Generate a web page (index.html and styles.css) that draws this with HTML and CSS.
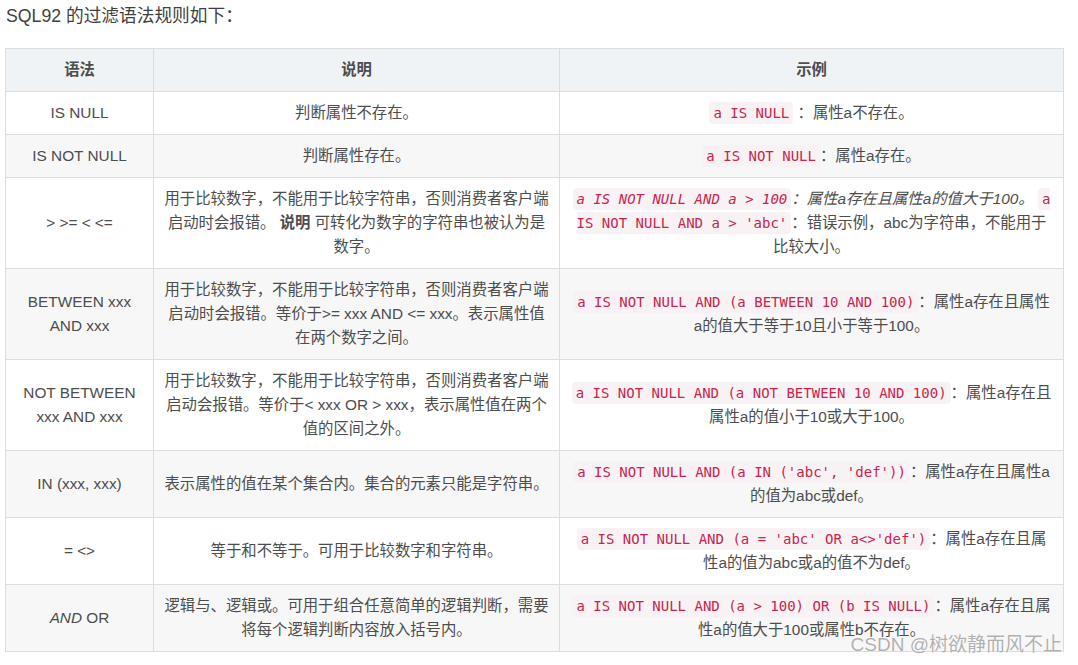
FILE: index.html
```html
<!DOCTYPE html>
<html lang="zh-CN">
<head>
<meta charset="utf-8">
<title>SQL92 过滤语法</title>
<link rel="stylesheet" href="styles.css">
</head>
<body>
<div class="page">
  <p class="intro">SQL92 的过滤语法规则如下：</p>
  <table class="rules">
    <colgroup>
      <col class="c1">
      <col class="c2">
      <col class="c3">
    </colgroup>
    <thead>
      <tr><th>语法</th><th>说明</th><th>示例</th></tr>
    </thead>
    <tbody>
      <tr>
        <td>IS NULL</td>
        <td>判断属性不存在。</td>
        <td><code>a IS NULL</code> ：属性a不存在。</td>
      </tr>
      <tr>
        <td>IS NOT NULL</td>
        <td>判断属性存在。</td>
        <td><code>a IS NOT NULL</code>：属性a存在。</td>
      </tr>
      <tr>
        <td>&gt; &gt;= &lt; &lt;=</td>
        <td>用于比较数字，不能用于比较字符串，否则消费者客户端启动时会报错。 <b>说明</b> 可转化为数字的字符串也被认为是数字。</td>
        <td><em><code>a IS NOT NULL AND a &gt; 100</code>：属性a存在且属性a的值大于100。</em> <code>a IS NOT NULL AND a &gt; 'abc'</code>：错误示例，abc为字符串，不能用于比较大小。</td>
      </tr>
      <tr>
        <td>BETWEEN xxx AND xxx</td>
        <td>用于比较数字，不能用于比较字符串，否则消费者客户端启动时会报错。等价于&gt;= xxx AND &lt;= xxx。表示属性值在两个数字之间。</td>
        <td><code>a IS NOT NULL AND (a BETWEEN 10 AND 100)</code>：属性a存在且属性a的值大于等于10且小于等于100。</td>
      </tr>
      <tr>
        <td>NOT BETWEEN xxx AND xxx</td>
        <td>用于比较数字，不能用于比较字符串，否则消费者客户端启动会报错。等价于&lt; xxx OR &gt; xxx，表示属性值在两个值的区间之外。</td>
        <td><code>a IS NOT NULL AND (a NOT BETWEEN 10 AND 100)</code>：属性a存在且属性a的值小于10或大于100。</td>
      </tr>
      <tr>
        <td>IN (xxx, xxx)</td>
        <td>表示属性的值在某个集合内。集合的元素只能是字符串。</td>
        <td><code>a IS NOT NULL AND (a IN ('abc', 'def'))</code>：属性a存在且属性a的值为abc或def。</td>
      </tr>
      <tr>
        <td>= &lt;&gt;</td>
        <td>等于和不等于。可用于比较数字和字符串。</td>
        <td><code>a IS NOT NULL AND (a = 'abc' OR a&lt;&gt;'def')</code>：属性a存在且属性a的值为abc或a的值不为def。</td>
      </tr>
      <tr>
        <td><em>AND</em> OR</td>
        <td>逻辑与、逻辑或。可用于组合任意简单的逻辑判断，需要将每个逻辑判断内容放入括号内。</td>
        <td><code>a IS NOT NULL AND (a &gt; 100) OR (b IS NULL)</code>：属性a存在且属性a的值大于100或属性b不存在。</td>
      </tr>
    </tbody>
  </table>
  <div class="watermark">CSDN @树欲静而风不止</div>
</div>
</body>
</html>
```

FILE: styles.css
```css
html, body {
  margin: 0;
  padding: 0;
  background: #ffffff;
}

.page {
  position: relative;
  height: 665px;
  padding: 3px 0 0 5px;
  box-sizing: border-box;
  font-family: "Liberation Sans", "Noto Sans CJK SC", sans-serif;
  color: #4d4d4d;
}

.intro {
  margin: 0 0 19px 1px;
  font-size: 17.7px;
  line-height: 26px;
  color: #3f3f3f;
}

.rules {
  width: 1059px;
  table-layout: fixed;
  border-collapse: collapse;
  font-size: 15.36px;
  line-height: 24px;
}

.rules .c1 { width: 148px; }
.rules .c2 { width: 406px; }
.rules .c3 { width: 504px; }

.rules th,
.rules td {
  border: 1px solid #dddddd;
  padding: 9px 10px;
  text-align: center;
  vertical-align: middle;
}

.rules th {
  background: #eff3f5;
  font-weight: bold;
  color: #4d4d4d;
}

.rules tbody tr:nth-child(even) td {
  background: #f7f7f7;
}

.rules b {
  font-weight: bold;
}

.rules em {
  font-style: italic;
}

.rules code {
  font-family: "DejaVu Sans Mono", monospace;
  font-size: 14px;
  color: #c7254e;
  background: #f9f2f4;
  padding: 3px 4px;
  border-radius: 4px;
}

.watermark {
  position: absolute;
  right: 16px;
  bottom: 9px;
  font-size: 19px;
  line-height: 22px;
  color: rgba(150, 150, 150, 0.75);
  text-shadow: 0 0 1px #ffffff;
  white-space: nowrap;
}
```
